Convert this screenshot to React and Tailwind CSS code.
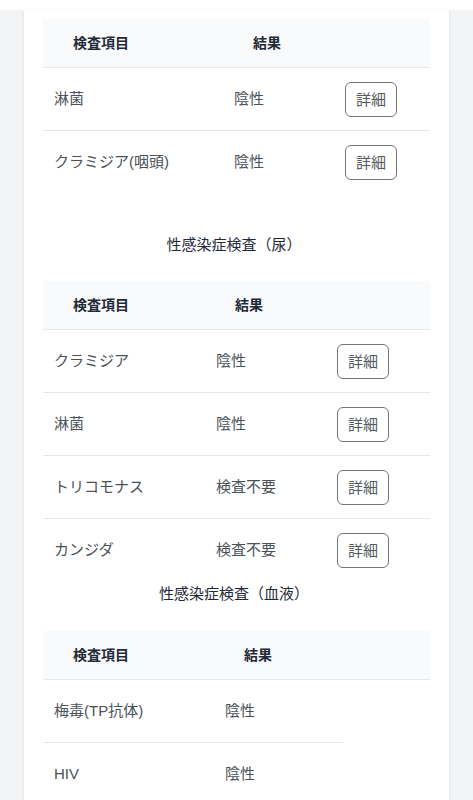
import React from "react";

const font = "font-['Liberation_Sans','Noto_Sans_CJK_JP',sans-serif]";

function DetailButton() {
  return (
    <button className="w-[52px] h-[35px] rounded-[6px] border border-[#757575] text-[15px] leading-none text-[#555a60] bg-white flex items-center justify-center">
      詳細
    </button>
  );
}

function Table({ cols, rows, rowWidth }) {
  return (
    <div className="w-[387px]">
      <div className={`grid ${cols} h-[49px] items-center bg-[#f9fafb] border-b border-[#e5e7eb]`}>
        <div className="pl-[30px] text-[14px] font-bold text-[#1f2937]">検査項目</div>
        <div className="pl-[30px] text-[14px] font-bold text-[#1f2937]">結果</div>
        <div />
      </div>
      {rows.map((r, i) => (
        <div
          key={i}
          className={`grid ${cols} h-[63px] items-center ${rowWidth} ${
            i < rows.length - 1 ? "border-b border-[#e5e7eb]" : ""
          }`}
        >
          <div className="pl-[11px] text-[15px] text-[#4b5158] whitespace-nowrap">{r[0]}</div>
          <div className="pl-[11px] text-[15px] text-[#4b5158] whitespace-nowrap">{r[1]}</div>
          <div className="pl-[11px]">{r[2] ? <DetailButton /> : null}</div>
        </div>
      ))}
    </div>
  );
}

export default function App() {
  return (
    <div className={`${font} w-[473px] h-[800px] overflow-hidden bg-[#f3f4f6]`}>
      <div className="h-[10px] bg-white" />
      <div className="mx-[24px] bg-white shadow-sm h-[790px] px-[19px] pt-[9px]">
        <Table
          cols="grid-cols-[180px_111px_1fr]"
          rowWidth="w-[387px]"
          rows={[
            ["淋菌", "陰性", true],
            ["クラミジア(咽頭)", "陰性", true],
          ]}
        />
        <div className="w-[387px] h-[22px] leading-[22px] text-center text-[15px] text-[#1f2937] mt-[40px] mb-[25px] pr-[5px]">
          性感染症検査（尿）
        </div>
        <Table
          cols="grid-cols-[162px_121px_1fr]"
          rowWidth="w-[387px]"
          rows={[
            ["クラミジア", "陰性", true],
            ["淋菌", "陰性", true],
            ["トリコモナス", "検査不要", true],
            ["カンジダ", "検査不要", true],
          ]}
        />
        <div className="w-[387px] h-[22px] leading-[22px] text-center text-[15px] text-[#1f2937] mt-[1px] mb-[26px] pr-[5px]">
          性感染症検査（血液）
        </div>
        <Table
          cols="grid-cols-[171px_129px_1fr]"
          rowWidth="w-[300px]"
          rows={[
            ["梅毒(TP抗体)", "陰性", false],
            ["HIV", "陰性", false],
          ]}
        />
      </div>
    </div>
  );
}
